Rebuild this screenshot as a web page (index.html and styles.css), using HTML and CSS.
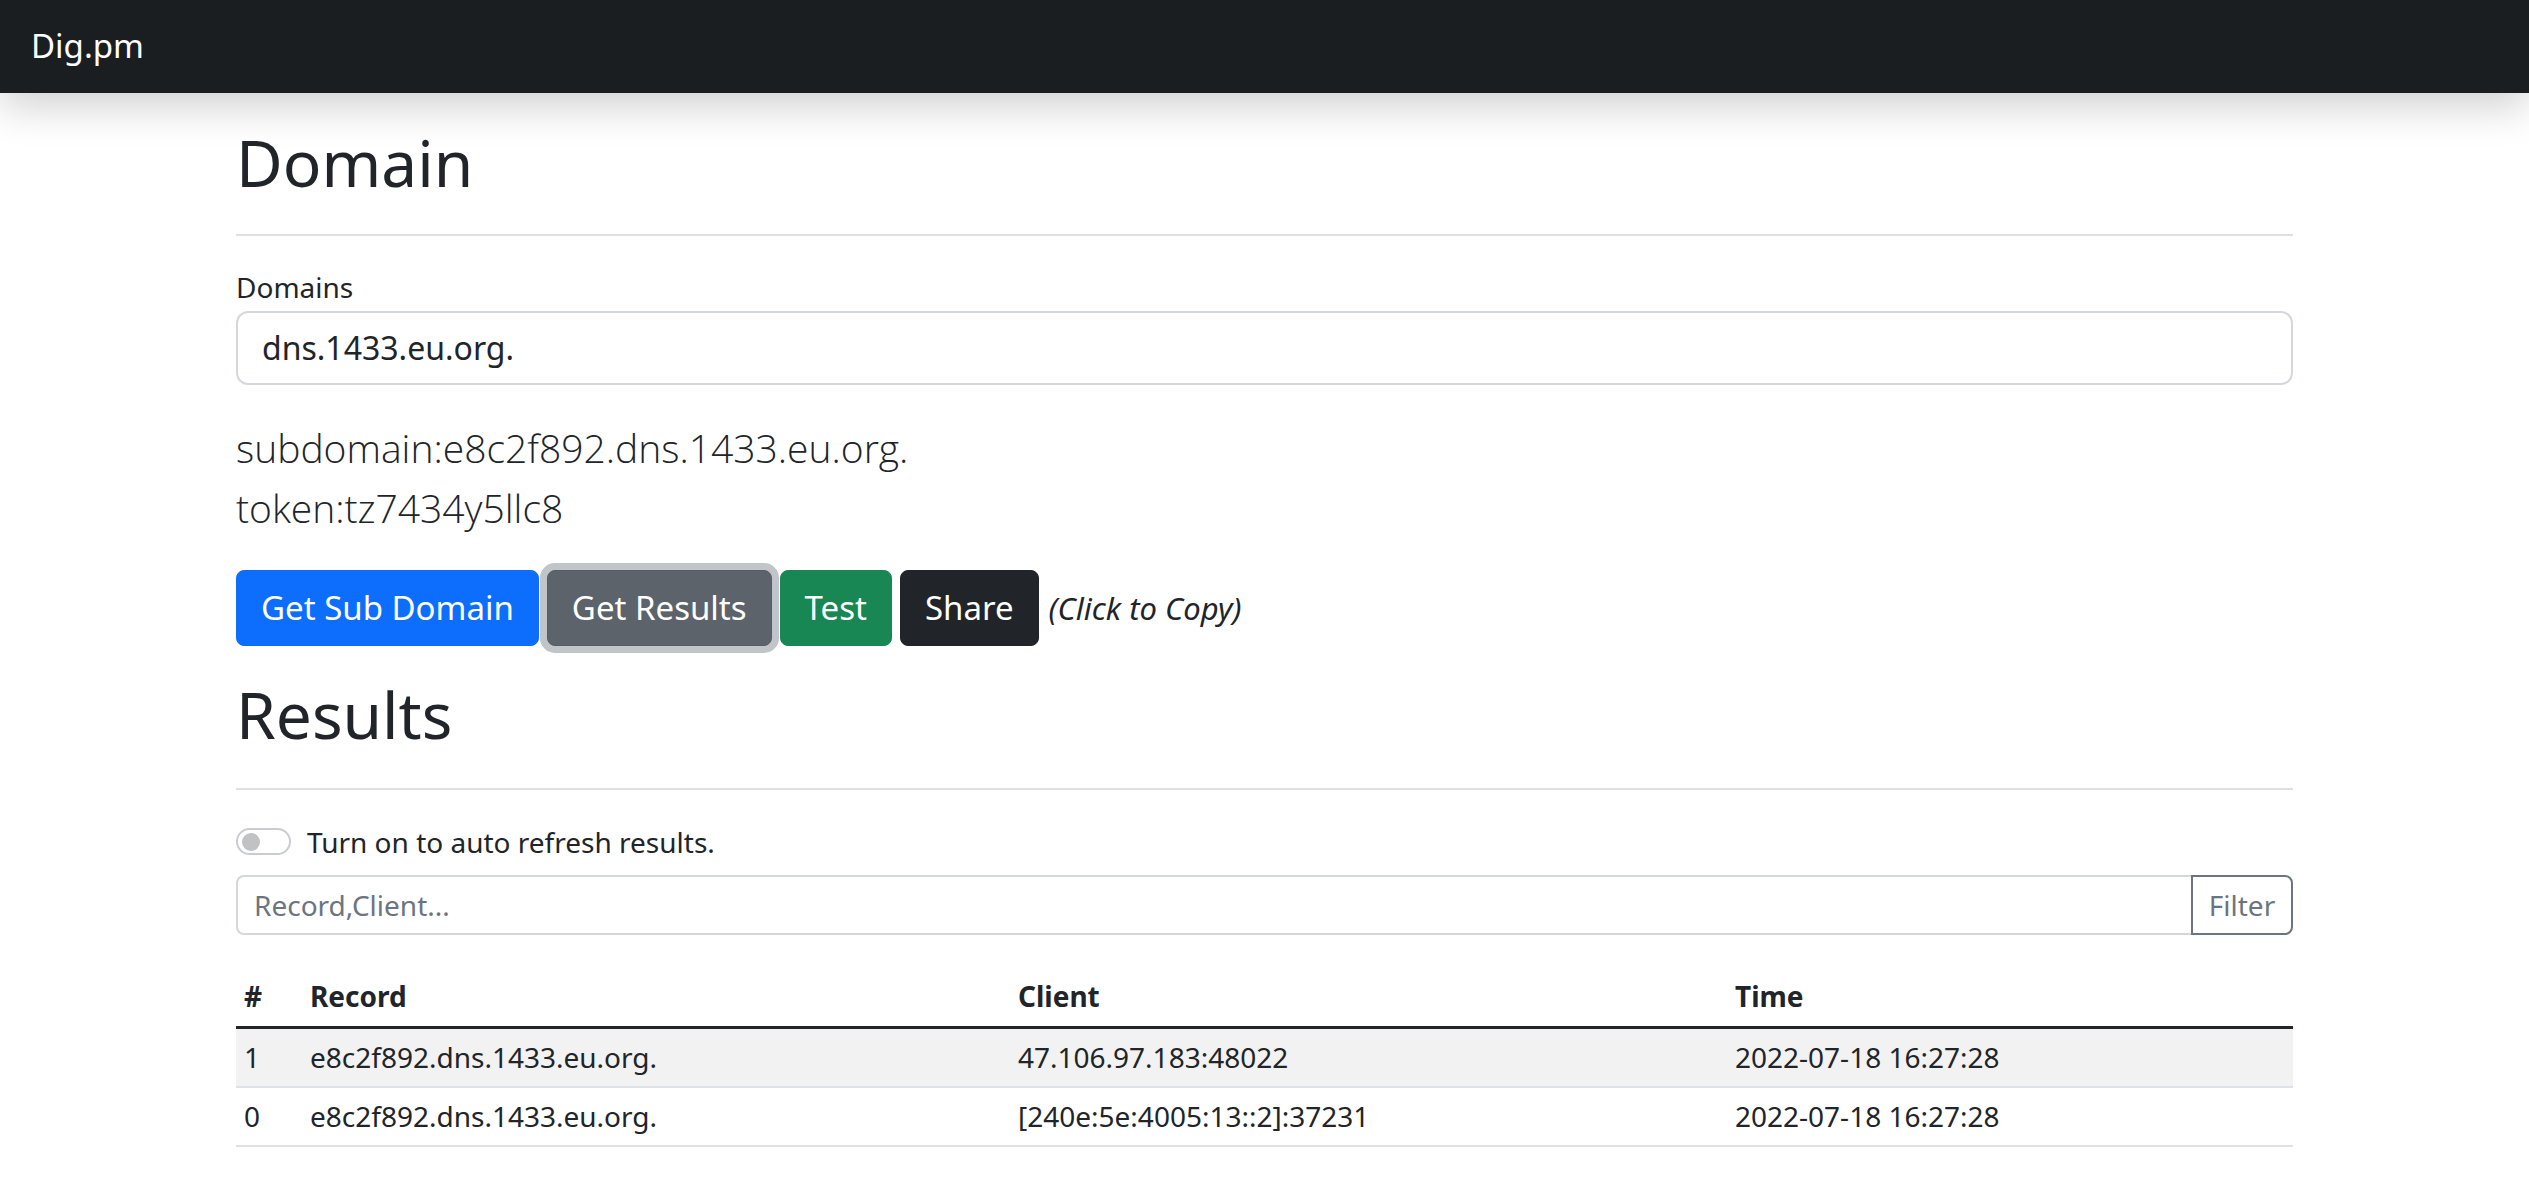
FILE: index.html
```html
<!DOCTYPE html>
<html lang="en">
<head>
<meta charset="utf-8">
<title>Dig.pm</title>
<link rel="stylesheet" href="styles.css">
</head>
<body>
<nav class="navbar"><a class="brand" href="#">Dig.pm</a></nav>
<main class="container">
  <h1 class="title">Domain</h1>
  <hr class="rule">
  <label class="field-label" for="domains">Domains</label>
  <input id="domains" class="field field-lg" type="text" value="dns.1433.eu.org.">
  <p class="lead">subdomain:e8c2f892.dns.1433.eu.org.<br>token:tz7434y5llc8</p>
  <div class="actions">
    <button class="btn btn-primary" type="button">Get Sub Domain</button>
    <button class="btn btn-secondary is-focused" type="button">Get Results</button>
    <button class="btn btn-success" type="button">Test</button>
    <button class="btn btn-dark" type="button">Share</button>
    <em class="hint">(Click to Copy)</em>
  </div>
  <h1 class="title">Results</h1>
  <hr class="rule rule-results">
  <div class="switch-row">
    <span class="switch"><span class="knob"></span></span>
    <span class="switch-label">Turn on to auto refresh results.</span>
  </div>
  <div class="filter">
    <input class="filter-input" type="text" placeholder="Record,Client...">
    <button class="filter-btn" type="button">Filter</button>
  </div>
  <table class="results">
    <colgroup>
      <col class="c-num"><col class="c-record"><col class="c-client"><col class="c-time">
    </colgroup>
    <thead>
      <tr><th>#</th><th>Record</th><th>Client</th><th>Time</th></tr>
    </thead>
    <tbody>
      <tr class="striped"><td>1</td><td>e8c2f892.dns.1433.eu.org.</td><td>47.106.97.183:48022</td><td>2022-07-18 16:27:28</td></tr>
      <tr><td>0</td><td>e8c2f892.dns.1433.eu.org.</td><td>[240e:5e:4005:13::2]:37231</td><td>2022-07-18 16:27:28</td></tr>
    </tbody>
  </table>
</main>
</body>
</html>
```

FILE: styles.css
```css
* { box-sizing: border-box; }

html, body { margin: 0; padding: 0; background: #fff; }

body {
  font-family: "Noto Sans", "Open Sans", sans-serif;
  font-size: 28px;
  line-height: 1.5;
  color: #212529;
}

.navbar {
  height: 93px;
  background: #1b1e21;
  display: flex;
  align-items: center;
  padding-left: 31px;
  box-shadow: 0 14px 40px rgba(0, 0, 0, 0.18);
}

.brand {
  color: #fff;
  font-size: 33px;
  line-height: 1;
  text-decoration: none;
  margin-top: -2px;
}

.container {
  width: 2057px;
  margin: 0 auto;
  padding-top: 32px;
}

.title {
  font-size: 64px;
  font-weight: 400;
  line-height: 1.2;
  margin: 0;
}

.rule {
  border: 0;
  border-top: 2px solid #dee0e3;
  margin: 32px 0 30px;
  height: 0;
}

.rule-results {
  margin: 34px 0 31px;
}

.field-label {
  display: block;
  line-height: 42px;
  margin-bottom: 3px;
}

.field-lg {
  display: block;
  width: 100%;
  height: 74px;
  border: 2px solid #d4d8dd;
  border-radius: 12px;
  padding: 0 24px;
  font-family: inherit;
  font-size: 32px;
  color: #212529;
  background: #fff;
  outline: none;
}

.lead {
  margin: 33px 0 32px;
  font-family: "Open Sans", "Noto Sans", sans-serif;
  font-size: 39px;
  font-weight: 300;
  line-height: 60px;
}

.actions {
  display: flex;
  align-items: center;
  gap: 8px;
  margin-bottom: 31px;
}

.btn {
  font-family: inherit;
  font-size: 33px;
  line-height: 50px;
  padding: 12px 24px;
  border: 1px solid transparent;
  border-radius: 8px;
  color: #fff;
  cursor: pointer;
}

.btn-primary { background: #0d6efd; border-color: #0d6efd; }
.btn-secondary { background: #5c636a; border-color: #565e64; }
.btn-success { background: #198754; border-color: #198754; }
.btn-dark { background: #212529; border-color: #212529; }

.is-focused {
  box-shadow: 0 0 0 7px #c1c4c8;
}

.hint {
  font-size: 31px;
  font-style: italic;
  margin-left: 2px;
}

.switch-row {
  display: flex;
  align-items: center;
  gap: 16px;
  height: 42px;
  line-height: 42px;
}

.switch {
  width: 55px;
  height: 27px;
  border: 2px solid #c9ccd0;
  border-radius: 14px;
  display: flex;
  align-items: center;
  padding-left: 4px;
}

.knob {
  width: 18px;
  height: 18px;
  border-radius: 50%;
  background: #c0c2c4;
}

.filter {
  display: flex;
  height: 60px;
  margin-top: 12px;
}

.filter-input {
  flex: 1;
  min-width: 0;
  border: 2px solid #d4d8dd;
  border-right: 0;
  border-radius: 8px 0 0 8px;
  padding: 0 16px;
  font-family: inherit;
  font-size: 28px;
  color: #212529;
  outline: none;
}

.filter-input::placeholder { color: #6c757d; opacity: 1; }

.filter-btn {
  width: 102px;
  border: 2px solid #6c757d;
  border-radius: 0 8px 8px 0;
  background: #fff;
  color: #6c757d;
  font-family: inherit;
  font-size: 28px;
  padding: 0;
}

.results {
  width: 100%;
  margin-top: 31px;
  border-collapse: collapse;
  table-layout: fixed;
}

.c-num { width: 66px; }
.c-record { width: 708px; }
.c-client { width: 717px; }

.results th {
  text-align: left;
  font-weight: 700;
  line-height: 42px;
  padding: 9px 8px;
  border-bottom: 3px solid #212529;
}

.results td {
  line-height: 42px;
  padding: 7px 8px 8px;
  border-bottom: 2px solid #dee2e6;
}

.results .striped td { background: #f2f2f2; }
```
